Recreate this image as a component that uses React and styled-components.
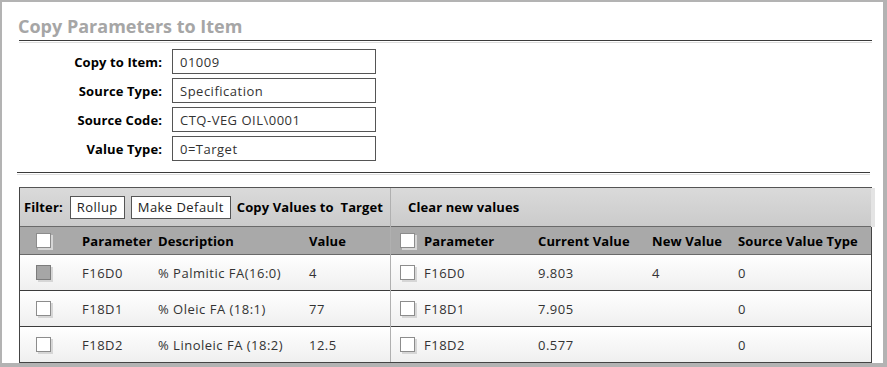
import React from 'react';
import styled, { createGlobalStyle } from 'styled-components';

const GlobalStyle = createGlobalStyle`
    html, body {
        margin: 0;
        padding: 0;
        background: #ffffff;
    }
    body {
        font-family: 'Open Sans', 'DejaVu Sans', sans-serif;
        font-size: 13px;
        letter-spacing: 0.5px;
        color: #333333;
    }
`;

const fields = [
    { label: 'Copy to Item:', value: '01009' },
    { label: 'Source Type:', value: 'Specification' },
    { label: 'Source Code:', value: 'CTQ-VEG OIL\\0001' },
    { label: 'Value Type:', value: '0=Target' },
];

const rows = [
    { param: 'F16D0', desc: '% Palmitic FA(16:0)', value: '4', current: '9.803', next: '4', type: '0', marked: true },
    { param: 'F18D1', desc: '% Oleic FA (18:1)', value: '77', current: '7.905', next: '', type: '0' },
    { param: 'F18D2', desc: '% Linoleic FA (18:2)', value: '12.5', current: '0.577', next: '', type: '0' },
];

const LEFT_COLS = '62px 76px 151px 1fr';
const RIGHT_COLS = '33px 114px 114px 86px 1fr';

function Check({ marked }) {
    return <CheckBox $marked={marked} />;
}

export default function App() {
    return (
        <>
            <GlobalStyle />
            <Frame>
                <Title>Copy Parameters to Item</Title>
                <Rule />

                <Form>
                    {fields.map((f) => (
                        <React.Fragment key={f.label}>
                            <Label>{f.label}</Label>
                            <Field>{f.value}</Field>
                        </React.Fragment>
                    ))}
                </Form>

                <Rule $shift />

                <Grid>
                    <Panel $divider>
                        <Toolbar>
                            <Strong>Filter:</Strong>
                            <Button>Rollup</Button>
                            <Button>Make Default</Button>
                            <Strong>Copy Values to&nbsp; Target</Strong>
                        </Toolbar>
                        <HeadRow $cols={LEFT_COLS}>
                            <CheckCell $pad={16}><Check /></CheckCell>
                            <span>Parameter</span>
                            <span>Description</span>
                            <span>Value</span>
                        </HeadRow>
                        {rows.map((r, i) => (
                            <DataRow key={r.param} $cols={LEFT_COLS} $last={i === rows.length - 1}>
                                <CheckCell $pad={16}><Check marked={r.marked} /></CheckCell>
                                <span>{r.param}</span>
                                <span>{r.desc}</span>
                                <span>{r.value}</span>
                            </DataRow>
                        ))}
                    </Panel>

                    <Panel>
                        <Toolbar $pad={17} $shadow>
                            <Strong>Clear new values</Strong>
                        </Toolbar>
                        <HeadRow $cols={RIGHT_COLS}>
                            <CheckCell $pad={9}><Check /></CheckCell>
                            <span>Parameter</span>
                            <span>Current Value</span>
                            <span>New Value</span>
                            <span>Source Value Type</span>
                        </HeadRow>
                        {rows.map((r, i) => (
                            <DataRow key={r.param} $cols={RIGHT_COLS} $last={i === rows.length - 1}>
                                <CheckCell $pad={9}><Check /></CheckCell>
                                <span>{r.param}</span>
                                <span>{r.current}</span>
                                <span>{r.next}</span>
                                <span>{r.type}</span>
                            </DataRow>
                        ))}
                    </Panel>
                </Grid>
            </Frame>
        </>
    );
}

const Frame = styled.div`
    box-sizing: border-box;
    width: 887px;
    height: 367px;
    border: 2px solid #b3b3b3;
    border-right-width: 4px;
    border-bottom-width: 4px;
    padding: 0 11px 0 17px;
    background: #ffffff;
`;

const Title = styled.div`
    margin: 13px 0 3px -1px;
    font-size: 18px;
    line-height: 22px;
    font-weight: 700;
    letter-spacing: 0;
    color: #a6a6a6;
`;

const Rule = styled.div`
    height: 1px;
    background: #3a3a3a;
    box-shadow: 0 2px 0 #dddddd;
    margin: ${(p) => (p.$shift ? '11px 2px 0 -2px' : '0')};
`;

const Form = styled.div`
    display: grid;
    grid-template-columns: 143px 204px;
    column-gap: 10px;
    row-gap: 4px;
    margin-top: 8px;
`;

const Label = styled.div`
    display: flex;
    align-items: center;
    justify-content: flex-end;
    height: 25px;
    font-weight: 700;
    letter-spacing: 0.1px;
    color: #000000;
`;

const Field = styled.div`
    box-sizing: border-box;
    display: flex;
    align-items: center;
    height: 25px;
    padding-left: 7px;
    border: 1px solid #555555;
    background: #ffffff;
    color: #333333;
`;

const Grid = styled.div`
    display: flex;
    margin-top: 14px;
    border: 1px solid #444444;
    border-top-color: #555555;
`;

const Panel = styled.div`
    display: flex;
    flex-direction: column;
    flex: ${(p) => (p.$divider ? '0 0 371px' : '1 1 auto')};
    box-sizing: border-box;
    border-right: ${(p) => (p.$divider ? '1px solid #b0b0b0' : 'none')};
`;

const Toolbar = styled.div`
    box-sizing: border-box;
    display: flex;
    align-items: center;
    gap: 6px;
    height: 39px;
    padding-left: ${(p) => p.$pad || 4}px;
    background: linear-gradient(#dadada, #cbcbcb);
    border-bottom: 1px solid #6a6a6a;
    color: #000000;
    box-shadow: ${(p) => (p.$shadow ? '4px 0 0 #e4e4e4' : 'none')};
`;

const Strong = styled.span`
    font-weight: 700;
    letter-spacing: 0.1px;
    margin-right: 1px;
    white-space: nowrap;
`;

const Button = styled.button`
    box-sizing: border-box;
    height: 23px;
    padding: 0 6px;
    border: 1px solid #555555;
    background: #ffffff;
    font-family: inherit;
    font-size: 13px;
    letter-spacing: 0.45px;
    color: #222222;
    white-space: nowrap;
`;

const HeadRow = styled.div`
    box-sizing: border-box;
    display: grid;
    grid-template-columns: ${(p) => p.$cols};
    align-items: center;
    height: 28px;
    background: #a9a9a9;
    border-bottom: 1px solid #6a6a6a;
    font-weight: 700;
    letter-spacing: 0.1px;
    color: #000000;
    white-space: nowrap;
`;

const DataRow = styled.div`
    box-sizing: border-box;
    display: grid;
    grid-template-columns: ${(p) => p.$cols};
    align-items: center;
    height: ${(p) => (p.$last ? '35px' : '36px')};
    background: linear-gradient(#ffffff, #efefef);
    border-bottom: ${(p) => (p.$last ? 'none' : '1px solid #3c3c3c')};
    color: #333333;
    white-space: nowrap;
`;

const CheckCell = styled.div`
    display: flex;
    padding-left: ${(p) => p.$pad}px;
`;

const CheckBox = styled.span`
    box-sizing: border-box;
    width: 15px;
    height: 15px;
    border: 1px solid ${(p) => (p.$marked ? '#7c7c7c' : '#8c8c8c')};
    background: ${(p) => (p.$marked ? '#a6a6a6' : '#ffffff')};
    box-shadow: 2px 2px 0 #d6d6d6;
`;
